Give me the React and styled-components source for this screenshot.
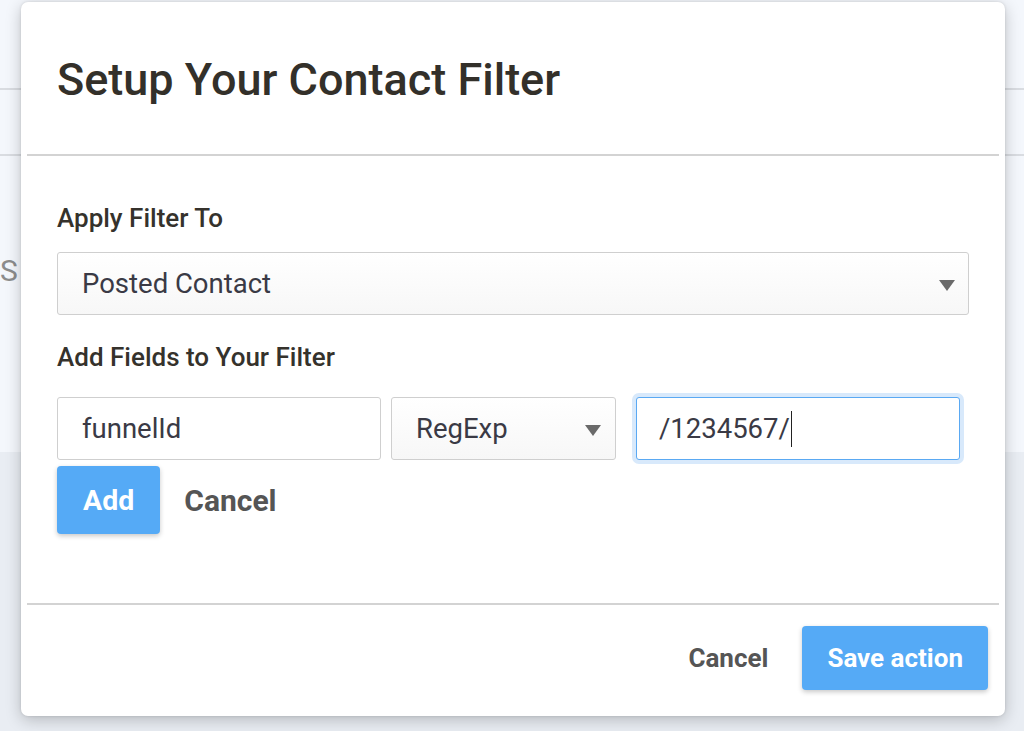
import React from "react";
import styled, { createGlobalStyle } from "styled-components";

const Global = createGlobalStyle`
  html, body { margin: 0; padding: 0; }
  body { font-family: Roboto, "Liberation Sans", Arial, sans-serif; background: #e9edf3; }
  * { box-sizing: border-box; }
`;

const Page = styled.div`
  position: relative;
  width: 1024px;
  height: 731px;
  overflow: hidden;
  background: #e9edf3;
`;

const BackCard = styled.div`
  height: 452px;
  background: #f4f7fc;
  display: flex;
  flex-direction: column;
`;

const BackRow = styled.div`
  height: ${(p) => p.h}px;
  border-bottom: ${(p) => (p.line ? "2px solid #d9dce1" : "none")};
  display: flex;
  align-items: center;
  font-size: 30px;
  color: #8c8c8c;
  padding-left: 0;
`;

const Modal = styled.div`
  position: absolute;
  top: 2px;
  left: 21px;
  width: 984px;
  height: 714px;
  background: #fff;
  border-radius: 7px;
  box-shadow: 0 4px 16px rgba(0, 0, 0, 0.22), 0 0 3px rgba(0, 0, 0, 0.12);
  display: flex;
  flex-direction: column;
`;

const Header = styled.div`
  height: 152px;
  display: flex;
  align-items: center;
  padding: 4px 36px 0 36px;
`;

const Title = styled.h1`
  margin: 0;
  font-size: 45px;
  line-height: 52px;
  font-weight: 500;
  color: #33302a;
`;

const Divider = styled.div`
  height: 2px;
  margin: 0 6px;
  background: #d3d3d3;
`;

const Body = styled.div`
  height: 447px;
  padding: 47px 36px 0 36px;
  display: flex;
  flex-direction: column;
`;

const Label = styled.div`
  font-size: 26px;
  line-height: 30px;
  font-weight: 500;
  color: #35322c;
  margin-bottom: ${(p) => p.mb}px;
`;

const SelectBox = styled.div`
  position: relative;
  width: ${(p) => p.w}px;
  height: 63px;
  margin-left: ${(p) => p.ml || 0}px;
  border: 1.5px solid #cfcfcf;
  border-radius: 3px;
  background: linear-gradient(#ffffff, #f7f7f7);
  display: flex;
  align-items: center;
  padding-left: 24px;
  font-size: 27.5px;
  color: #3a3a45;
  margin-bottom: ${(p) => p.mb || 0}px;
`;

const Arrow = styled.span`
  position: absolute;
  right: ${(p) => p.r}px;
  top: 50%;
  margin-top: -4px;
  width: 0;
  height: 0;
  border-left: 8px solid transparent;
  border-right: 8px solid transparent;
  border-top: 11px solid #6a6a6a;
`;

const FieldRow = styled.div`
  display: flex;
  align-items: center;
`;

const Field = styled.div`
  width: ${(p) => p.w}px;
  height: 63px;
  margin-left: ${(p) => p.ml || 0}px;
  border: 1.5px solid ${(p) => (p.focused ? "#5aa9f3" : "#cfcfcf")};
  border-radius: 3px;
  background: #fff;
  display: flex;
  align-items: center;
  padding-left: ${(p) => p.pl || 24}px;
  font-size: 27.5px;
  color: #3a3a45;
  box-shadow: ${(p) => (p.focused ? "0 0 0 4px #d8e9fb" : "none")};
`;

const Caret = styled.span`
  display: inline-block;
  width: 1.5px;
  height: 36px;
  background: #222;
  margin-left: 1px;
`;

const ActionRow = styled.div`
  display: flex;
  align-items: center;
  margin-top: 6px;
  gap: 24px;
`;

const PrimaryButton = styled.button`
  height: ${(p) => p.h}px;
  padding: 0 ${(p) => p.px}px;
  border: none;
  border-radius: 4px;
  background: #55aaf6;
  color: #fff;
  font-family: Roboto, "Liberation Sans", Arial, sans-serif;
  font-size: ${(p) => p.fs}px;
  font-weight: 700;
  box-shadow: 0 2px 5px rgba(0, 0, 0, 0.22);
  cursor: pointer;
`;

const TextButton = styled.button`
  border: none;
  background: none;
  padding: 0;
  color: #555;
  font-family: Roboto, "Liberation Sans", Arial, sans-serif;
  font-size: ${(p) => p.fs}px;
  font-weight: 700;
  cursor: pointer;
`;

const Footer = styled.div`
  flex: 1;
  display: flex;
  justify-content: flex-end;
  align-items: flex-start;
  padding: 21px 17px 0 0;
  gap: 34px;
`;

const FooterCancel = styled(TextButton)`
  height: 64px;
`;

export default function App() {
  return (
    <Page>
      <Global />
      <BackCard>
        <BackRow h={90} line />
        <BackRow h={66} line />
        <BackRow h={228}>S</BackRow>
      </BackCard>
      <Modal>
        <Header>
          <Title>Setup Your Contact Filter</Title>
        </Header>
        <Divider />
        <Body>
          <Label mb={19}>Apply Filter To</Label>
          <SelectBox w={912} mb={27}>
            Posted Contact
            <Arrow r={13} />
          </SelectBox>
          <Label mb={25}>Add Fields to Your Filter</Label>
          <FieldRow>
            <Field w={324}>funnelId</Field>
            <SelectBox w={225} ml={10}>
              RegExp
              <Arrow r={14} />
            </SelectBox>
            <Field w={324} ml={20} pl={22} focused>
              /1234567/
              <Caret />
            </Field>
          </FieldRow>
          <ActionRow>
            <PrimaryButton h={68} px={26} fs={28.5}>Add</PrimaryButton>
            <TextButton fs={30}>Cancel</TextButton>
          </ActionRow>
        </Body>
        <Divider />
        <Footer>
          <FooterCancel fs={26}>Cancel</FooterCancel>
          <PrimaryButton h={64} px={25} fs={26}>Save action</PrimaryButton>
        </Footer>
      </Modal>
    </Page>
  );
}
